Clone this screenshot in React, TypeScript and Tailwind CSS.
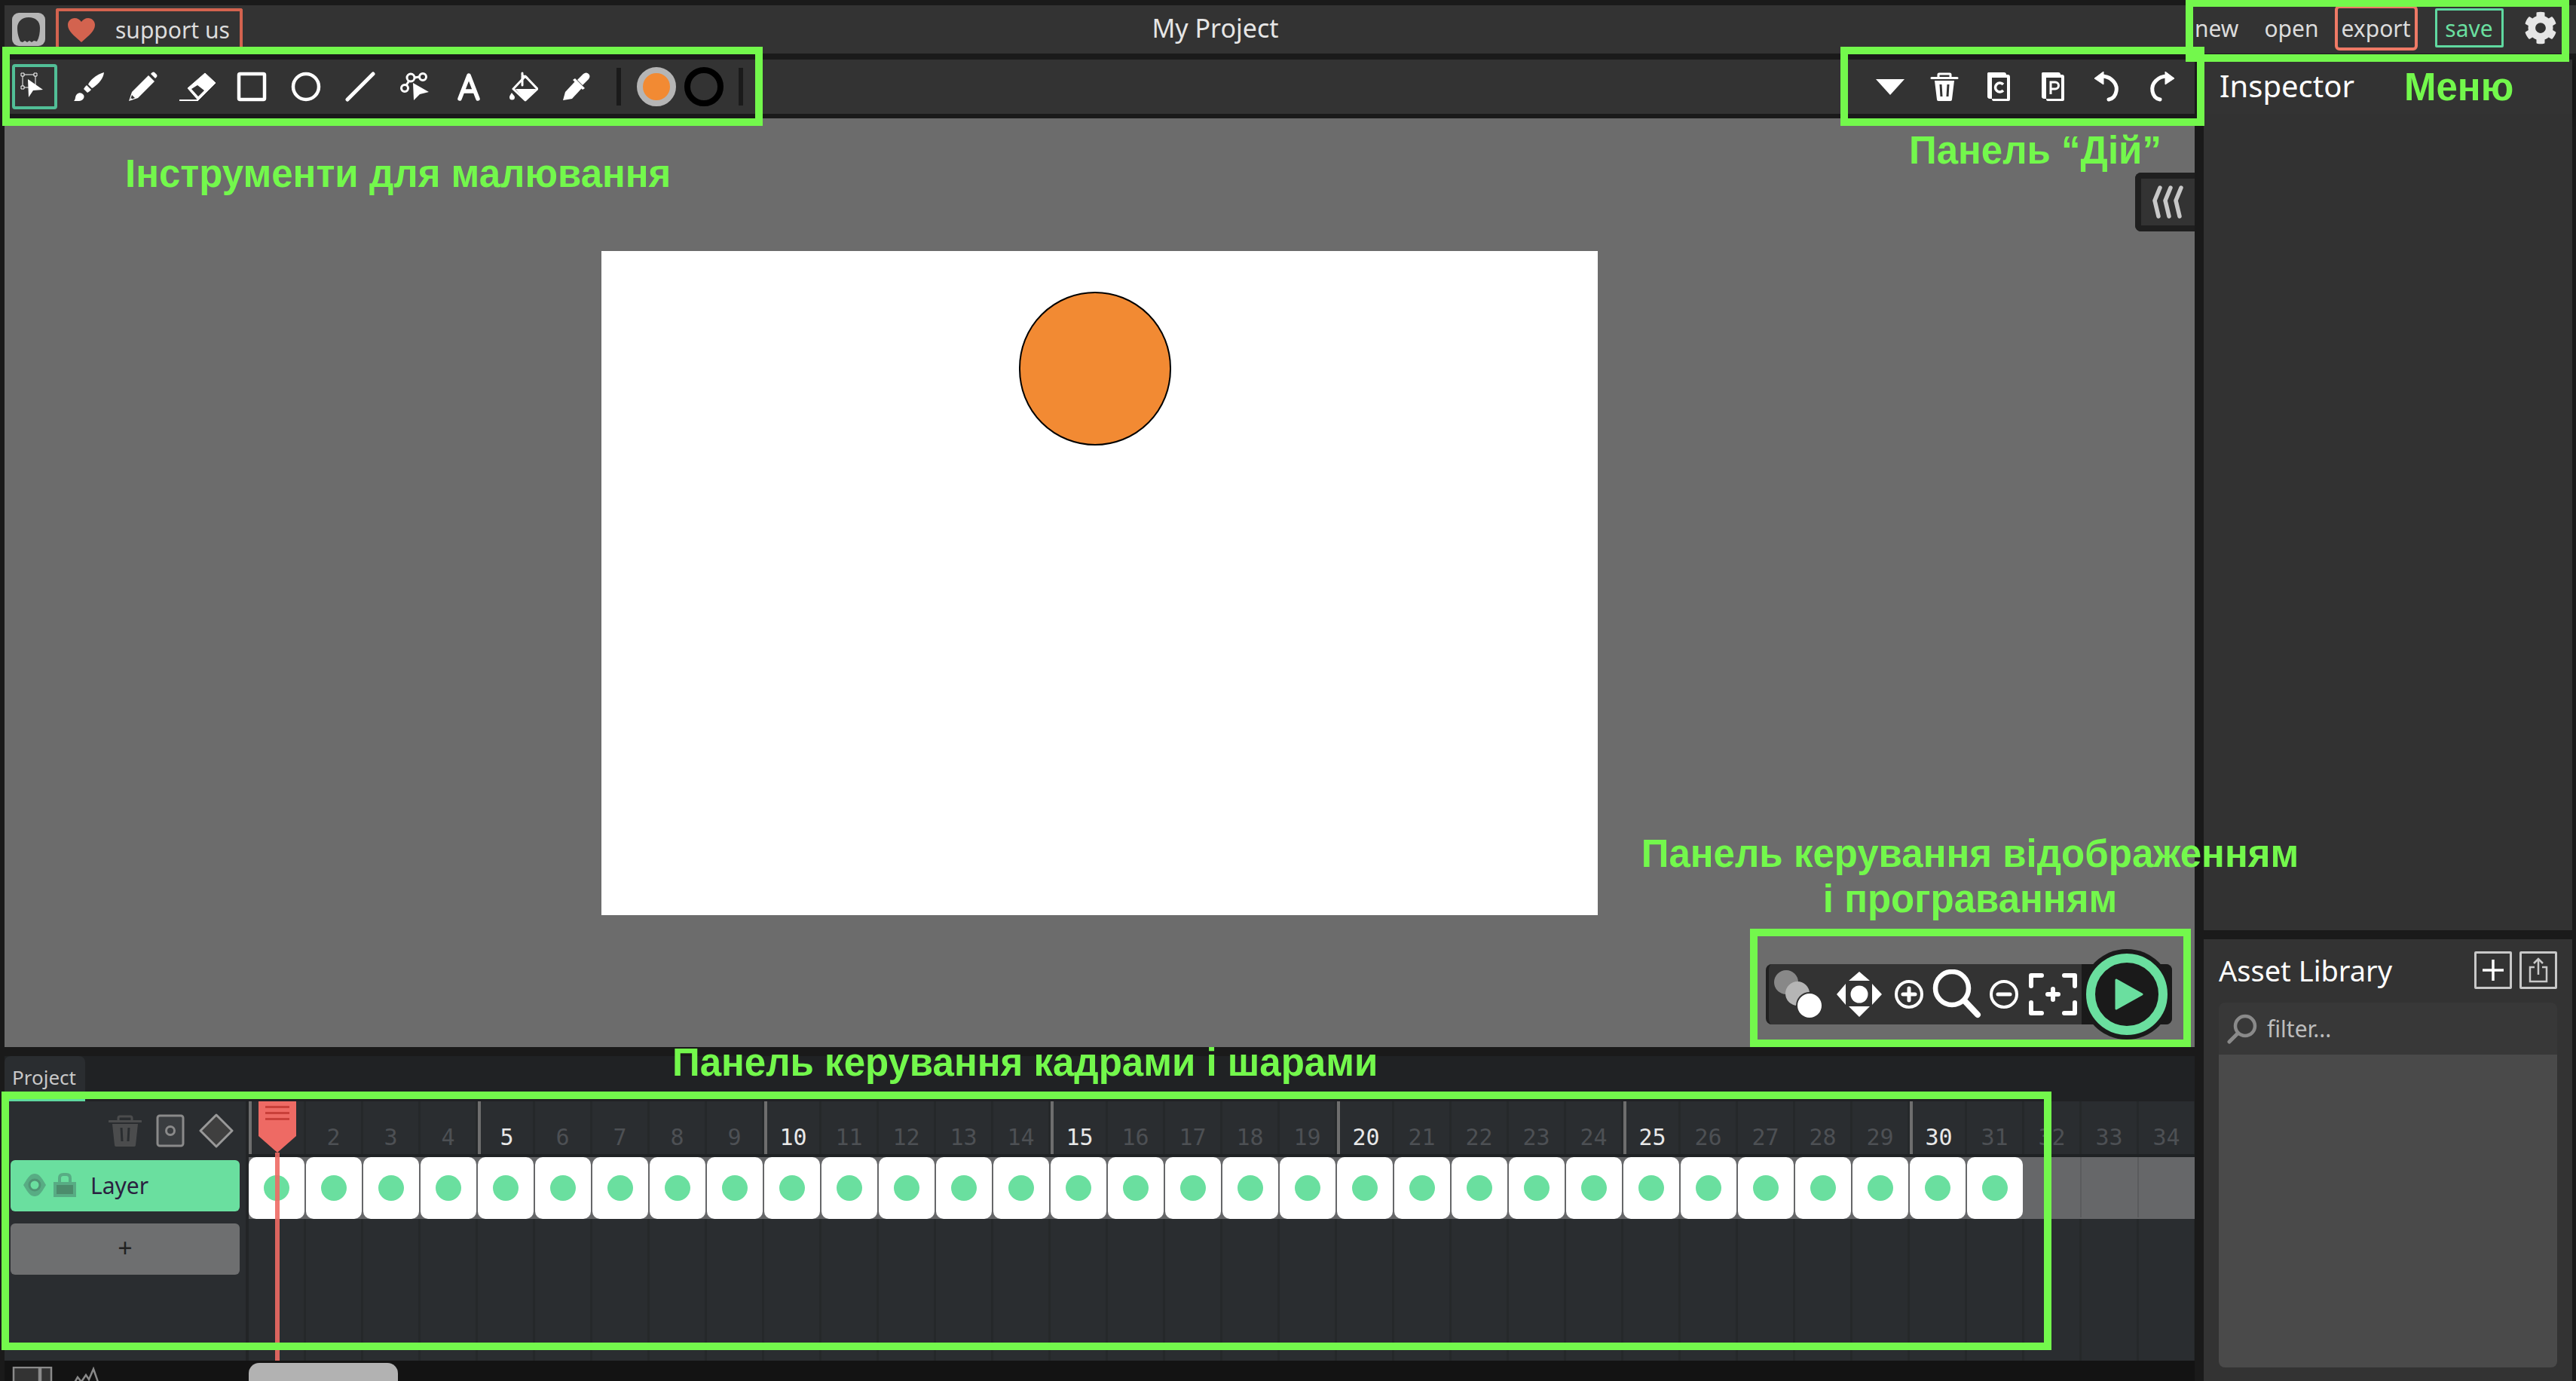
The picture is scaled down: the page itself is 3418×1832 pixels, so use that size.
import { ReactNode } from 'react'
import { FaCog } from 'react-icons/fa'

const FRAMES = Array.from({ length: 34 }, (_, i) => i + 1)

const Icon = ({ children, w = 40, h = 40 }: { children: ReactNode; w?: number; h?: number }) => (
  <svg width={w} height={h} viewBox={`0 0 ${w} ${h}`} fill="none">
    {children}
  </svg>
)

const SelectIcon = () => (
  <Icon>
    <path d="M4 4h17v17H4z" stroke="#fff" strokeWidth="1" />
    <path d="M2 2h4v4H2zM19 2h4v4h-4zM2 19h4v4H2z" fill="#333" stroke="#fff" strokeWidth="1" />
    <path d="M11 10l20 14-13 1-6 9z" fill="#fff" />
  </Icon>
)

const BrushIcon = () => (
  <Icon>
    <path d="M40 1C32 3 24 9 20 15l-1 2 5 5 2-1C34 15 39 9 40 1z" fill="#fff" />
    <path d="M15 20l2-2 6 6-2 2-3 2-5-5z" fill="#fff" />
    <path d="M0 39c3-3 1-6 4-9 3-3 7-2 9 1 2 4-2 8-6 8z" fill="#fff" />
  </Icon>
)

const PencilIcon = () => (
  <Icon>
    <path d="M1 39l4-12L27 5l8 8-22 22z" fill="#fff" />
    <path d="M30 3l2-2q2-1 3 0l3 3q1 2 0 3l-2 2z" fill="#fff" />
    <path d="M3 37l2-6 4 4z" fill="#333" />
    <path d="M3 38l1-3 2 2z" fill="#fff" />
  </Icon>
)

const EraserIcon = () => (
  <Icon w={48}>
    <path d="M34 2l14 13-23 23L11 22z" fill="#fff" stroke="#fff" strokeLinejoin="round" />
    <path d="M24 18l9 7-8 8-9-10z" fill="#333" />
    <path d="M0 37h25v2H0z" fill="#fff" />
  </Icon>
)

const RectIcon = () => (
  <Icon>
    <rect x="3" y="3" width="34" height="34" rx="1.5" stroke="#fff" strokeWidth="4.5" />
  </Icon>
)

const CircleIcon = () => (
  <Icon>
    <circle cx="20" cy="20" r="17" stroke="#fff" strokeWidth="4.5" />
  </Icon>
)

const LineIcon = () => (
  <Icon>
    <path d="M3 37L37 3" stroke="#fff" strokeWidth="5" strokeLinecap="round" />
  </Icon>
)

const PathIcon = () => (
  <Icon>
    <path d="M9 18l4-6M20 8l6-1" stroke="#fff" strokeWidth="3" />
    <circle cx="7" cy="22" r="4.5" stroke="#fff" strokeWidth="3" />
    <circle cx="15" cy="8" r="5" stroke="#fff" strokeWidth="3" />
    <circle cx="31" cy="7" r="4.5" stroke="#fff" strokeWidth="3" />
    <path d="M18 15l21 12-12 3-8 8z" fill="#fff" />
  </Icon>
)

const TextToolIcon = () => (
  <Icon>
    <path d="M8 36L20 5l12 31M12 26h16" stroke="#fff" strokeWidth="5.5" strokeLinecap="round" strokeLinejoin="round" />
  </Icon>
)

const BucketIcon = () => (
  <Icon>
    <path d="M23 6L7 23l16 15 16-15z" stroke="#fff" strokeWidth="3" strokeLinejoin="round" />
    <path d="M10 23h27L23 38z" fill="#fff" />
    <path d="M19 2v16M19 5l6 3" stroke="#fff" strokeWidth="3" strokeLinecap="round" />
    <path d="M5 28c-2 3-3 4-3 6a3.200 3.200 0 0 0 7 0c0-2-2-3-4-6z" fill="#fff" />
  </Icon>
)

const DropperIcon = () => (
  <Icon>
    <path d="M1 38l3-11 13-14 9 9-13 14z" fill="#fff" />
    <path d="M17 9l13 13-3 2-13-13z" fill="#fff" />
    <path d="M20 11l8-8q4-3 7 0t0 7l-8 8z" fill="#fff" />
  </Icon>
)

const TrashIcon = ({ color = '#fff' }: { color?: string }) => (
  <Icon>
    <path d="M12 8V4q0-1 1-1h14q1 0 1 1v4" stroke={color} strokeWidth="3" />
    <path d="M3 8.500h34" stroke={color} strokeWidth="3" strokeLinecap="round" />
    <path d="M7 12h26l-3 25q0 2-2 2H12q-2 0-2-2z" fill={color} />
    <path d="M15 17l1 16M25 17l-1 16" stroke="#333" strokeWidth="3" />
  </Icon>
)

const SheetIcon = ({ letter }: { letter: 'C' | 'P' }) => (
  <Icon>
    <g transform="translate(2 0)">
      <path d="M4 1h21q3 0 3 3h2q3 0 3 3v30q0 2-2 2H11q-2 0-2-3H6q-2 0-3-2V2z" fill="#fff" />
      <path d="M9 8h20v28H9z" fill="#333" />
      {letter === 'C' ? (
        <path d="M24 17a6 6 0 1 0 0 8" stroke="#fff" strokeWidth="3.500" />
      ) : (
        <path d="M15 30V14h6a4.500 4.500 0 0 1 0 9h-6" stroke="#fff" strokeWidth="3" />
      )}
    </g>
  </Icon>
)

const UndoIcon = () => (
  <Icon>
    <path d="M12 6c13 0 22 10 20 20-1 6-5 10-10 11" stroke="#fff" strokeWidth="5" strokeLinecap="round" />
    <path d="M15 0L3 9l12 8z" fill="#fff" stroke="#fff" strokeLinejoin="round" />
  </Icon>
)

const RedoIcon = () => (
  <Icon>
    <path d="M28 6C15 6 6 16 8 26c1 6 5 10 10 11" stroke="#fff" strokeWidth="5" strokeLinecap="round" />
    <path d="M25 0l12 9-12 8z" fill="#fff" stroke="#fff" strokeLinejoin="round" />
  </Icon>
)

const ToolButton = ({ children, active }: { children: ReactNode; active?: boolean }) => (
  <div
    className={`flex h-[60px] w-[60px] shrink-0 items-center justify-center rounded-[4px] ${
      active ? 'border-[4px] border-[#52bf97]' : ''
    }`}
  >
    {children}
  </div>
)

const Label = ({ className, children }: { className: string; children: ReactNode }) => (
  <div
    className={`absolute z-30 font-['Liberation_Sans',Arial,sans-serif] text-[51px] leading-[60px] font-bold whitespace-nowrap text-[#73f84c] ${className}`}
  >
    {children}
  </div>
)

const TopBar = () => (
  <div className="ml-[6px] flex h-[64px] shrink-0 items-start bg-[#333] text-[30px] text-[#dcdcdc]">
    <div className="mt-[10px] ml-[10px] flex h-[44px] w-[44px] items-center justify-center rounded-[9px] bg-[#b5b5b5]">
      <svg width="30" height="33" viewBox="0 0 30 33" fill="#333">
        <path d="M15 0C6 0 0 6 0 14c0 8 2 13 4 18l3 1 3-2 3 2 3-2 3 2 3-2 4 1c3-5 4-12 4-18C30 5 24 0 15 0z" />
      </svg>
    </div>
    <div className="mt-[4px] ml-[14px] flex h-[60px] w-[248px] items-center rounded-t-[3px] border-[4px] border-b-0 border-[#d3634f] pb-[7px] pl-[12px]">
      <svg width="36" height="32" viewBox="0 0 36 32" fill="#d3634f">
        <path d="M18 32C8 23 0 17 0 9c0-5 4-9 9-9 4 0 7 2 9 5 2-3 5-5 9-5 5 0 9 4 9 9 0 8-8 14-18 23z" />
      </svg>
      <span className="ml-[27px]">support us</span>
    </div>
    <div className="flex h-full flex-1 items-center justify-center pb-[4px] text-[34px] text-[#e6e6e6]">
      <span className="mr-[3px]">My Project</span>
    </div>
    <div className="flex h-full w-[512px] shrink-0 items-center pb-[4px]">
      <span className="ml-[6px]">new</span>
      <span className="ml-[34px]">open</span>
      <span className="ml-[21px] flex h-[60px] w-[110px] items-center justify-center rounded-[6px] border-[4px] border-[#ef7a66]">
        export
      </span>
      <span className="ml-[23px] flex h-[52px] w-[91px] items-center justify-center rounded-[2px] border-[3px] border-[#5fd9a0] text-[#6adf9f]">
        save
      </span>
      <FaCog className="ml-[27px] text-[44px] text-[#e6e6e6]" />
    </div>
  </div>
)

const Toolbar = () => (
  <div className="flex h-[72px] shrink-0 items-center justify-between bg-[#333] pr-[14px] pl-[10px]">
    <div className="flex items-center gap-[12px]">
      <ToolButton active>
        <SelectIcon />
      </ToolButton>
      <ToolButton>
        <BrushIcon />
      </ToolButton>
      <ToolButton>
        <PencilIcon />
      </ToolButton>
      <ToolButton>
        <EraserIcon />
      </ToolButton>
      <ToolButton>
        <RectIcon />
      </ToolButton>
      <ToolButton>
        <CircleIcon />
      </ToolButton>
      <ToolButton>
        <LineIcon />
      </ToolButton>
      <ToolButton>
        <PathIcon />
      </ToolButton>
      <ToolButton>
        <TextToolIcon />
      </ToolButton>
      <ToolButton>
        <BucketIcon />
      </ToolButton>
      <ToolButton>
        <DropperIcon />
      </ToolButton>
      <div className="ml-[10px] h-[50px] w-[6px] bg-[#1a1a1a]" />
      <div className="ml-[9px] h-[52px] w-[52px] rounded-full border-[8px] border-[#b5b5b5] bg-[#f28a33]" />
      <div className="ml-[-1px] h-[52px] w-[52px] rounded-full border-[8px] border-black" />
      <div className="ml-[8px] h-[50px] w-[6px] bg-[#1a1a1a]" />
    </div>
    <div className="flex items-center gap-[12px]">
      <ToolButton>
        <svg width="40" height="24" viewBox="0 0 40 24" fill="#fff">
          <path d="M1 2h38L20 23z" />
        </svg>
      </ToolButton>
      <ToolButton>
        <TrashIcon />
      </ToolButton>
      <ToolButton>
        <SheetIcon letter="C" />
      </ToolButton>
      <ToolButton>
        <SheetIcon letter="P" />
      </ToolButton>
      <ToolButton>
        <UndoIcon />
      </ToolButton>
      <ToolButton>
        <RedoIcon />
      </ToolButton>
    </div>
  </div>
)

const PlaybackControls = () => (
  <div className="absolute top-[1122px] left-[2337px] flex h-[80px] w-[539px] items-center rounded-[8px] border-l-[4px] border-[#1f1f1f] bg-[#333]">
    <svg className="ml-[6px]" width="66" height="66" viewBox="0 0 66 66">
      <circle cx="17" cy="17" r="16" fill="#888" />
      <circle cx="32" cy="32" r="16" fill="#b5b5b5" />
      <circle cx="48" cy="48" r="18" fill="#333" />
      <circle cx="48" cy="48" r="16" fill="#fff" />
    </svg>
    <svg className="ml-[17px]" width="62" height="62" viewBox="0 0 62 62" fill="#fff">
      <circle cx="31" cy="31" r="11.500" />
      <path d="M31 1l14 12H17zM31 61L17 47h28zM1 31l12-14v28zM61 31L48 17v28z" />
    </svg>
    <svg className="ml-[16px]" width="38" height="38" viewBox="0 0 38 38" fill="none" stroke="#fff" strokeWidth="4">
      <circle cx="19" cy="19" r="17" />
      <path d="M11 19h16M19 11v16" strokeWidth="5" strokeLinecap="round" />
    </svg>
    <svg className="ml-[11px]" width="66" height="66" viewBox="0 0 66 66" fill="none" stroke="#fff">
      <circle cx="27" cy="25" r="22" strokeWidth="6.500" />
      <path d="M44 42l17 18" strokeWidth="8" strokeLinecap="round" />
    </svg>
    <svg className="ml-[11px]" width="38" height="38" viewBox="0 0 38 38" fill="none" stroke="#fff" strokeWidth="4">
      <circle cx="19" cy="19" r="17" />
      <path d="M11 19h16" strokeWidth="5" strokeLinecap="round" />
    </svg>
    <svg className="ml-[14px]" width="64" height="56" viewBox="0 0 64 56" fill="none" stroke="#fff" strokeWidth="6" strokeLinecap="round" strokeLinejoin="round">
      <path d="M3 17V3h14M47 3h14v14M3 39v14h14M47 53h14V39" />
      <path d="M25 28h14M32 21v14" />
    </svg>
    <div className="ml-auto h-full w-[120px] rounded-r-[8px] bg-[#1a1a1a]" />
    <div className="absolute top-[-20px] right-[0px] flex h-[120px] w-[120px] items-center justify-center rounded-full bg-[#1a1a1a]">
      <div className="flex h-[108px] w-[108px] items-center justify-center rounded-full border-[12px] border-[#6adf9f] bg-[#1a1a1a] pl-[6px]">
        <svg width="38" height="42" viewBox="0 0 38 42" fill="#6adf9f" stroke="#6adf9f" strokeWidth="3" strokeLinejoin="round">
          <path d="M2 2l34 19L2 40z" />
        </svg>
      </div>
    </div>
  </div>
)

const Canvas = () => (
  <div className="relative flex flex-1 items-center justify-center overflow-hidden bg-[#6c6c6c]">
    <div className="relative h-[881px] w-[1322px] bg-white">
      <div className="absolute top-[54px] left-[554px] h-[204px] w-[202px] rounded-full border-[2px] border-black bg-[#f28a33]" />
    </div>
    <div className="absolute top-[72px] right-0 flex h-[78px] w-[79px] items-center justify-center rounded-l-[8px] border-y-[8px] border-l-[8px] border-[#1f1f1f] bg-[#333]">
      <svg width="42" height="44" viewBox="0 0 42 44" fill="none" stroke="#c8c8c8" strokeWidth="5.500" strokeLinecap="round" strokeLinejoin="round">
        <path d="M10 3L3 20l5 21M24 3l-7 17 5 21M38 3l-7 17 5 21" />
      </svg>
    </div>
    <PlaybackControls />
  </div>
)

const Frame = ({ n }: { n: number }) => {
  const bright = n % 5 === 0
  const tick = bright || n === 1
  return (
    <div className="flex w-[76px] shrink-0 flex-col">
      <div
        className={`flex h-[70px] items-end justify-center border-r-[3px] border-[#25282a] pb-[2px] font-['DejaVu_Sans_Mono',monospace] text-[30px] leading-[40px] ${
          bright ? 'text-[#e8e8e8]' : 'text-[#4d5054]'
        } ${tick ? 'border-l-[4px] border-l-[#6e6e6e]' : ''}`}
      >
        {n}
      </div>
      <div className="h-[4px] bg-[#1f2224]" />
      <div className="h-[82px] bg-[#666769]">
        {n <= 31 ? (
          <div className="flex h-full w-[74px] items-center justify-center rounded-[10px] bg-white">
            <div className="h-[34px] w-[34px] rounded-full bg-[#6adf9f]" />
          </div>
        ) : (
          <div className="h-[80px] w-full border-r-[2px] border-[#5a5b5d]" />
        )}
      </div>
      <div className="flex-1 border-r-[3px] border-[#25282a]" />
    </div>
  )
}

const Timeline = () => (
  <div className="flex h-[431px] shrink-0 flex-col bg-[#202224]">
    <div className="flex h-[60px] shrink-0 items-end">
      <div className="h-[60px] w-[107px] rounded-t-[8px] border-b-[3px] border-[#5fd9a0] bg-[#2a2d30] pt-[12px] pl-[10px] text-[26px] leading-[32px] text-[#c8c8c8]">
        Project
      </div>
    </div>
    <div className="relative flex h-[344px] shrink-0 bg-[#2a2d30]">
      <div className="flex w-[324px] shrink-0 flex-col border-r-[4px] border-[#222426] pl-[8px]">
        <div className="flex h-[78px] items-center justify-end gap-[19px] pr-[16px]">
          <div className="opacity-70">
            <svg width="44" height="44" viewBox="0 0 44 44" fill="none">
              <path d="M13 9V5q0-2 2-2h14q2 0 2 2v4" stroke="#5a5a5a" strokeWidth="3" />
              <path d="M1 9.500h42" stroke="#5a5a5a" strokeWidth="3" strokeLinecap="round" />
              <path d="M5 13h34l-3 28q0 2-2 2H10q-2 0-2-2z" fill="#5a5a5a" />
              <path d="M17 18l1 18M27 18l-1 18" stroke="#2a2d30" strokeWidth="3" />
            </svg>
          </div>
          <svg width="38" height="44" viewBox="0 0 38 44" fill="none" stroke="#8a8a8a">
            <rect x="2" y="2" width="34" height="40" rx="3" strokeWidth="3" fill="#3a3d40" />
            <circle cx="19" cy="22" r="5.500" strokeWidth="3" />
          </svg>
          <svg width="46" height="46" viewBox="0 0 46 46">
            <path d="M23 2l21 21-21 21L2 23z" fill="#3f3f3f" stroke="#999" strokeWidth="3" strokeLinejoin="round" />
          </svg>
        </div>
        <div className="flex h-[68px] w-[304px] items-center rounded-[6px] bg-[#6adf9f] pb-[2px] pl-[16px] text-[30px] text-[#2a2140]">
          <svg width="32" height="32" viewBox="0 0 32 32">
            <path d="M16 1c5 0 8 3 15 15-7 12-10 15-15 15S8 28 1 16C8 4 11 1 16 1z" fill="#58ac84" />
            <circle cx="16" cy="16" r="7" fill="#6adf9f" stroke="#4f9474" strokeWidth="3" />
          </svg>
          <svg className="ml-[8px]" width="32" height="32" viewBox="0 0 32 32">
            <path d="M9 15V7q0-5 5-5h4q5 0 5 5v8" fill="none" stroke="#58ac84" strokeWidth="4" />
            <rect x="1" y="12" width="30" height="20" fill="#58ac84" />
            <rect x="5" y="16" width="22" height="12" fill="#4c8c6c" />
          </svg>
          <span className="ml-[18px]">Layer</span>
        </div>
        <div className="mt-[16px] flex h-[68px] w-[304px] items-center justify-center rounded-[6px] bg-[#6e6f70] pb-[4px] text-[34px] text-[#222]">
          +
        </div>
      </div>
      <div className="flex flex-1 overflow-hidden">
        {FRAMES.map((n) => (
          <Frame key={n} n={n} />
        ))}
      </div>
      <div className="absolute top-0 left-[337px] z-10 flex w-[50px] flex-col items-center">
        <svg width="50" height="68" viewBox="0 0 50 68">
          <path d="M0 0h50v46L25 68 0 46z" fill="#ee6a64" />
          <path d="M9 6h32v3H9zM9 14h32v3H9zM9 22h32v3H9z" fill="#c9403a" />
        </svg>
        <div className="h-[276px] w-[6px] bg-[#ee6a64] opacity-90" />
      </div>
    </div>
    <div className="flex h-[27px] shrink-0 overflow-hidden bg-[#131313]">
      <svg className="mt-[8px] ml-[10px]" width="116" height="30" viewBox="0 0 116 30" fill="none" stroke="#8a8a8a" strokeWidth="2.500">
        <rect x="2" y="1" width="34" height="26" fill="#333" />
        <rect x="38" y="1" width="14" height="26" fill="#333" />
        <path d="M80 26l7-12 5 6 6-9 4 6 6-14 8 23" />
      </svg>
      <div className="mt-[3px] ml-[198px] h-[40px] w-[198px] rounded-[14px] bg-[#b2b2b2]" />
    </div>
  </div>
)

const RightPanel = () => (
  <div className="flex w-[489px] shrink-0 flex-col">
    <div className="flex h-[72px] shrink-0 items-center bg-[#333] pb-[2px] pl-[21px] text-[40px] text-white shadow-[0_6px_10px_rgba(0,0,0,0.45)]">
      Inspector
    </div>
    <div className="flex-1 bg-[#323232]" />
    <div className="mt-[12px] flex h-[586px] shrink-0 flex-col bg-[#333] px-[20px]">
      <div className="flex h-[84px] shrink-0 items-center justify-between pb-[2px]">
        <span className="text-[38px] text-white">Asset Library</span>
        <div className="flex gap-[10px]">
          <div className="flex h-[50px] w-[50px] items-center justify-center rounded-[2px] border-[3px] border-[#c8c8c8]">
            <svg width="30" height="30" viewBox="0 0 30 30" stroke="#fff" strokeWidth="3.500">
              <path d="M15 1v28M1 15h28" />
            </svg>
          </div>
          <div className="flex h-[50px] w-[50px] items-center justify-center rounded-[2px] border-[3px] border-[#c8c8c8]">
            <svg width="26" height="34" viewBox="0 0 26 34" fill="none" stroke="#c8c8c8" strokeWidth="2.500">
              <path d="M8 13H2v19h22V13h-6M13 23V2M7 8l6-6 6 6" />
            </svg>
          </div>
        </div>
      </div>
      <div className="flex h-[69px] shrink-0 items-center rounded-t-[8px] bg-[#383838] pl-[11px] text-[30px] text-[#bdbdbd]">
        <svg width="40" height="40" viewBox="0 0 40 40" fill="none" stroke="#8a8a8a">
          <circle cx="24" cy="16" r="13" strokeWidth="4.500" />
          <path d="M14 26L3 37" strokeWidth="5" strokeLinecap="round" />
        </svg>
        <span className="ml-[13px]">filter...</span>
      </div>
      <div className="h-[415px] shrink-0 rounded-b-[8px] bg-[#4a4a4a]" />
    </div>
  </div>
)

export default function App() {
  return (
    <div className="relative flex h-[1832px] w-[3418px] flex-col overflow-hidden bg-[#1a1a1a] pt-[7px] font-['Noto_Sans',sans-serif]">
      <TopBar />
      <div className="mt-[8px] flex min-h-0 flex-1 gap-[12px] pl-[6px]">
        <div className="flex w-[2906px] shrink-0 flex-col">
          <Toolbar />
          <div className="mt-[6px] mb-[12px] flex min-h-0 flex-1">
            <Canvas />
          </div>
          <Timeline />
        </div>
        <RightPanel />
      </div>

      <div className="absolute top-[62px] left-[3px] z-20 h-[105px] w-[1009px] border-[10px] border-[#73f84c]" />
      <div className="absolute top-[62px] left-[2442px] z-20 h-[105px] w-[483px] border-[10px] border-[#73f84c]" />
      <div className="absolute top-[-1px] left-[2900px] z-20 h-[83px] w-[509px] border-[10px] border-[#73f84c]" />
      <div className="absolute top-[1232px] left-[2322px] z-20 h-[157px] w-[585px] border-[10px] border-[#73f84c]" />
      <div className="absolute top-[1448px] left-[2px] z-20 h-[343px] w-[2720px] border-[10px] border-[#73f84c]" />

      <Label className="top-[201px] left-[166px]">Інструменти для малювання</Label>
      <Label className="top-[170px] left-[2533px]">Панель “Дій”</Label>
      <Label className="top-[86px] left-[3190px]">Меню</Label>
      <Label className="top-[1103px] left-[2176px] w-[876px] text-center">
        Панель керування відображенням
        <br />і програванням
      </Label>
      <Label className="top-[1380px] left-[892px]">Панель керування кадрами і шарами</Label>
    </div>
  )
}
